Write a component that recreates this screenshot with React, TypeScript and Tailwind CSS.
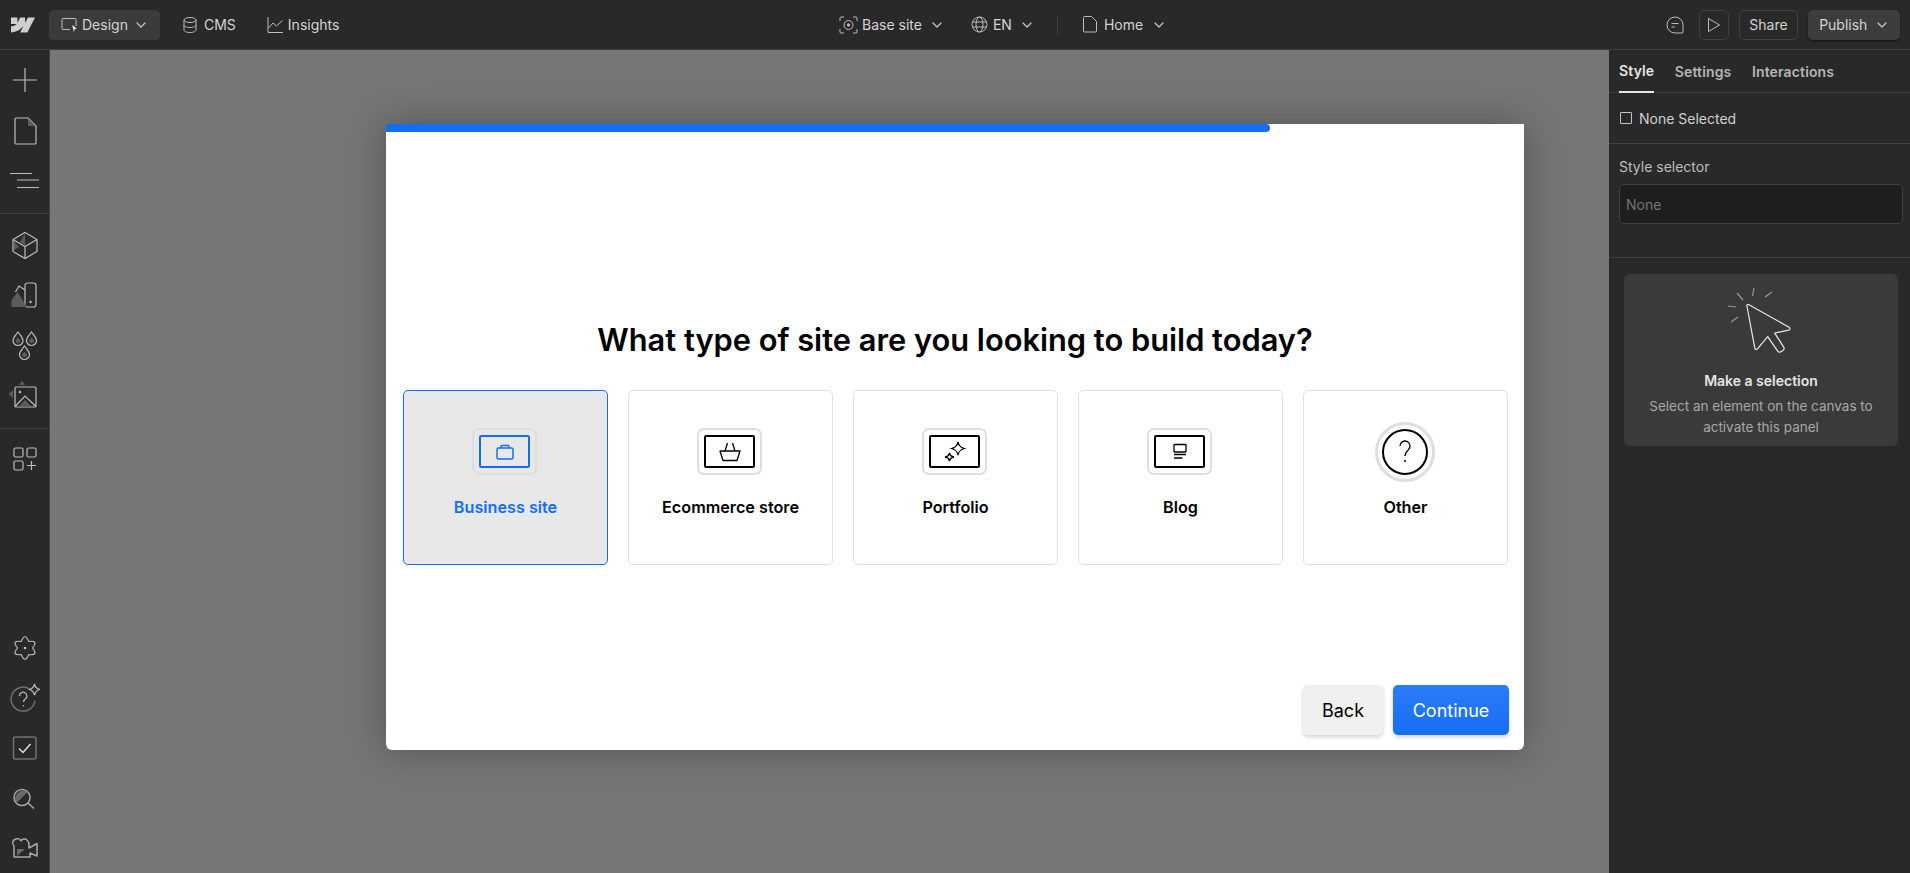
import type { ReactNode } from 'react';
import { ChevronDown } from 'lucide-react';
import { SiWebflow } from 'react-icons/si';

const shade = '#5c5c5c';
const line = '#bdbdbd';

function RailButton({ children }: { children: ReactNode }) {
  return (
    <div className="flex h-[50px] w-full shrink-0 items-center justify-center">
      <svg width="32" height="32" viewBox="0 0 32 32" fill="none" stroke={line} strokeWidth="1.2" className="overflow-visible">
        {children}
      </svg>
    </div>
  );
}

function TopItem({ icon, label, className }: { icon: ReactNode; label: string; className?: string }) {
  return (
    <div className={`flex items-center text-[14px] text-[#d4d4d4] ${className ?? ''}`}>
      {icon}
      <span>{label}</span>
    </div>
  );
}

function Chevron({ className }: { className?: string }) {
  return <ChevronDown size={16} strokeWidth={1.8} className={`-mr-[1.5px] text-[#c8c8c8] ${className ?? ''}`} />;
}

function SiteCard({
  label,
  active,
  round,
  children,
}: {
  label: string;
  active?: boolean;
  round?: boolean;
  children: ReactNode;
}) {
  return (
    <div
      className={`flex h-[175px] w-[205px] flex-col items-center rounded-[5px] border ${
        active ? 'border-[#146ef5] bg-[#e8e8e8] text-[#146ef5]' : 'border-[#e0e0e0] bg-white text-black'
      }`}
    >
      <div className="mt-[37px] flex h-[47px] items-center justify-center pr-[2px]">
        {round ? (
          <div className="flex h-[60px] w-[60px] shrink-0 items-center justify-center rounded-full border-[3px] border-[#dedede]">
            <div className="flex h-[46px] w-[46px] items-center justify-center rounded-full border-2 border-black">
              {children}
            </div>
          </div>
        ) : (
          <div className="flex h-[47px] w-[65px] items-center justify-center rounded-[7px] border-2 border-[#dedede]">
            <div className="flex h-[33px] w-[51px] items-center justify-center rounded-[2px] border-2 border-current">
              {children}
            </div>
          </div>
        )}
      </div>
      <div className="mt-[22px] text-[16.2px] leading-[20px] font-semibold">{label}</div>
    </div>
  );
}

export default function App() {
  return (
    <div className="relative flex h-screen w-full flex-col overflow-hidden bg-[#292929] font-[Inter,sans-serif]">
      {/* Top bar */}
      <header className="flex h-[50px] shrink-0 items-center border-b border-[#3f3f3f] bg-[#292929]">
        <div className="flex w-[839px] shrink-0 items-center">
          <SiWebflow size={24} className="ml-[11px] text-[#cfcfcf]" />
          <div className="ml-[14px] flex h-[30px] w-[111px] items-center rounded-[5px] bg-[#3b3b3b] pl-[12px] text-[14px] text-[#d4d4d4]">
            <svg width="16" height="16" viewBox="0 0 16 16" fill="none" stroke={line} className="mr-[5px]">
              <path d="M9 12.500H2a1 1 0 0 1-1-1V2.500a1 1 0 0 1 1-1h12a1 1 0 0 1 1 1V9" />
              <path d="M11 8l5 3.500-2.200.6L13 15z" fill="#e6e6e6" stroke="none" />
            </svg>
            <span>Design</span>
            <Chevron className="ml-[5.500px]" />
          </div>
          <TopItem
            className="ml-[23px]"
            label="CMS"
            icon={
              <svg width="14" height="18" viewBox="0 0 14 18" fill="none" stroke={line} className="mr-[7px]">
                <ellipse cx="7" cy="4" rx="6" ry="2.500" />
                <path d="M1 4v10c0 1.400 2.700 2.500 6 2.500s6-1.100 6-2.500V4M1 9c0 1.400 2.700 2.500 6 2.500S13 10.400 13 9" />
              </svg>
            }
          />
          <TopItem
            className="ml-[31px]"
            label="Insights"
            icon={
              <svg width="16" height="16" viewBox="0 0 16 16" fill="none" stroke={line} className="mr-[5px]">
                <path d="M1 0v15.500h15" />
                <path d="M1.500 11L6 6l3.500 3L15.500 3.500" />
              </svg>
            }
          />
        </div>
        <div className="flex items-center">
          <TopItem
            label="Base site"
            icon={
              <svg width="19" height="18" viewBox="0 0 19 18" fill="none" stroke={line} className="mr-[4px]">
                <path d="M1 5V2a1 1 0 0 1 1-1h3M14 1h3a1 1 0 0 1 1 1v3M18 13v3a1 1 0 0 1-1 1h-3M5 17H2a1 1 0 0 1-1-1v-3" />
                <circle cx="9.500" cy="9" r="4.500" />
                <circle cx="9.500" cy="9" r="1.200" fill={line} />
              </svg>
            }
          />
          <Chevron className="ml-[7.500px]" />
          <TopItem
            className="ml-[27px]"
            label="EN"
            icon={
              <svg width="17" height="17" viewBox="0 0 17 17" fill="none" stroke={line} className="mr-[5px]">
                <circle cx="8.500" cy="8.500" r="7.500" />
                <ellipse cx="8.500" cy="8.500" rx="3.500" ry="7.500" />
                <path d="M1.500 6h14M1.500 11h14" />
              </svg>
            }
          />
          <Chevron className="ml-[7.500px]" />
          <div className="ml-[23px] h-[20px] w-px bg-[#3f3f3f]" />
          <TopItem
            className="ml-[25px]"
            label="Home"
            icon={
              <svg width="14" height="17" viewBox="0 0 14 17" fill="none" stroke={line} className="mr-[7px]">
                <path d="M1.500.500H8.500L13.500 5.500V15a1 1 0 0 1-1 1h-11a1 1 0 0 1-1-1V1.500a1 1 0 0 1 1-1z" />
              </svg>
            }
          />
          <Chevron className="ml-[7.500px]" />
        </div>
        <div className="ml-auto flex items-center pr-[10px]">
          <svg width="18" height="18" viewBox="0 0 18 18" fill="none" stroke={line}>
            <path d="M9 1a8 8 0 0 1 8 8v7a1 1 0 0 1-1 1H9A8 8 0 0 1 9 1z" />
            <path d="M5.500 7.500h7M5.500 11h3.500" />
          </svg>
          <div className="ml-[15px] flex h-[30px] w-[30px] items-center justify-center rounded-[5px] border border-[#404040]">
            <svg width="14" height="16" viewBox="0 0 14 16" fill="none" stroke={line}>
              <path d="M1.500 1.500v13L12.500 8z" strokeLinejoin="round" />
            </svg>
          </div>
          <div className="ml-[10px] flex h-[30px] w-[59px] items-center justify-center rounded-[5px] border border-[#404040] text-[14px] text-[#d4d4d4]">
            Share
          </div>
          <div className="ml-[10px] flex h-[30px] w-[92px] items-center justify-center gap-[7px] rounded-[5px] bg-[#3d3d3d] text-[14px] text-[#d4d4d4] shadow-[0_1px_2px_rgba(0,0,0,0.5)]">
            <span>Publish</span>
            <Chevron />
          </div>
        </div>
      </header>

      <div className="flex min-h-0 flex-1">
        {/* Left rail */}
        <nav className="flex w-[50px] shrink-0 flex-col border-r border-[#3f3f3f] bg-[#292929]">
          <div className="border-b border-[#3f3f3f] pt-[5px] pb-[8px]">
            <RailButton>
              <path d="M16 4v24M4 16h24" />
            </RailButton>
            <RailButton>
              <path d="M7 4h12l8 8v17a1 1 0 0 1-1 1H7a1 1 0 0 1-1-1V5a1 1 0 0 1 1-1z" />
              <path d="M19 4.500l7.500 7.500H19z" fill={shade} stroke="none" />
            </RailButton>
            <RailButton>
              <path d="M1 9.500h22M8 16h22M8 23.500h22" />
            </RailButton>
          </div>
          <div className="border-b border-[#3f3f3f] pt-[6px] pb-[8px]">
            <RailButton>
              <path d="M16 3.500l12 7v12l-12 7-12-7v-12z" />
              <path d="M4 10.500l12 7 12-7M16 17.500v12" />
              <path d="M16 4.500l-5 8.500 5 3zM5 12v9l5-3z" fill={shade} stroke="none" />
            </RailButton>
            <RailButton>
              <rect x="16" y="4" width="11" height="24" rx="2.500" />
              <circle cx="21.500" cy="23" r="1.200" fill={line} stroke="none" />
              <path d="M16 11l-6-4-3.500 6" />
              <path d="M2.500 28v-7l6-8 9.500 15z" fill={shade} stroke="none" />
            </RailButton>
            <RailButton>
              <path d="M9 3c2.500 3.500 5 5.500 5 8.500a5 5 0 0 1-10 0C4 8.500 6.500 6.500 9 3zM22.500 3c2.500 3.500 5 5.500 5 8.500a5 5 0 0 1-10 0c0-3 2.500-5 5-8.500zM15.500 17c2.500 3.500 5 5.500 5 8.500a5 5 0 0 1-10 0c0-3 2.500-5 5-8.500z" />
              <path d="M9 8.500c1 1.300 2.500 2 2.500 3.200a2.500 2.500 0 0 1-5 0c0-1.200 1.500-1.900 2.500-3.200zM22.500 8.500c1 1.300 2.500 2 2.500 3.200a2.500 2.500 0 0 1-5 0c0-1.200 1.500-1.900 2.500-3.200zM15.500 22.500c1 1.300 2.500 2 2.500 3.200a2.500 2.500 0 0 1-5 0c0-1.200 1.500-1.900 2.500-3.200z" fill={shade} stroke="none" />
            </RailButton>
            <RailButton>
              <rect x="6" y="8" width="21" height="20" rx="1" />
              <circle cx="11" cy="13" r="1.300" fill={line} stroke="none" />
              <path d="M6 27.500L16 17l11 10.500" />
              <path d="M10 27.500l6-6.500 6.500 6.500z" fill={shade} stroke="none" />
              <path d="M16 6l-3-4.500L10 6zM4 11l-4.500 4L4 19z" fill={shade} stroke="none" />
            </RailButton>
          </div>
          <div className="pt-[5px]">
            <RailButton>
              <rect x="5" y="5" width="9" height="9" rx="1.500" />
              <rect x="18" y="5" width="9" height="9" rx="1.500" />
              <rect x="5" y="18" width="9" height="9" rx="1.500" />
              <path d="M22.500 18v9M18 22.500h9" />
            </RailButton>
          </div>
          <div className="mt-auto">
            <RailButton>
              <path d="M12.250 9.500Q16 0 19.750 9.500Q29.860 8 23.500 16Q29.860 24 19.750 22.500Q16 32 12.250 22.500Q2.140 24 8.500 16Q2.140 8 12.250 9.500z" strokeLinejoin="round" />
              <circle cx="16" cy="16" r="1.300" fill={line} stroke="none" />
            </RailButton>
            <RailButton>
              <path d="M20.500 7a12 12 0 1 0 5.500 11.500" stroke="#6e6e6e" strokeWidth="1.500" />
              <path d="M10.500 14a3.700 3.700 0 1 1 5.800 3c-1.100.8-1.800 1.500-1.800 3M14.500 23v1.500" />
              <path d="M25.500 2c.7 3 1.900 4.800 5.500 5.500-3.600.7-4.800 2.500-5.500 5.500-.7-3-1.900-4.800-5.500-5.500 3.600-.7 4.800-2.500 5.500-5.500z" />
            </RailButton>
            <RailButton>
              <rect x="4.500" y="5" width="22.500" height="22" rx="2" stroke="#707070" strokeWidth="1.500" />
              <path d="M10 16.500l4 4 7.500-8.500" stroke="#e0e0e0" strokeWidth="1.500" />
            </RailButton>
            <RailButton>
              <circle cx="13" cy="15.500" r="8" strokeWidth="1.500" stroke="#a8a8a8" />
              <path d="M19 21l6 5.500" strokeWidth="1.500" stroke="#a8a8a8" />
              <path d="M7.500 21A8 8 0 0 1 18.500 10z" fill="#6a6a6a" stroke="none" />
            </RailButton>
            <RailButton>
              <path d="M5 25V14C3 12 3 8 7 7c2-1 4 0 5 2 1-2 4-3 6-1 2 1.500 2 3 2 5v3l8-4.500V24l-7-3v4z" stroke="#a8a8a8" strokeWidth="1.500" strokeLinejoin="round" />
              <path d="M8 17h8l-8 7z" fill="#6a6a6a" stroke="none" />
            </RailButton>
          </div>
        </nav>

        {/* Canvas */}
        <main className="flex-1 bg-[#767676]" />

        {/* Right panel */}
        <aside className="w-[301px] shrink-0 bg-[#292929]">
          <div className="flex h-[43px] gap-[20.500px] border-b border-[#3f3f3f] px-[10px] text-[14px] font-semibold tracking-[0.01em] text-[#b5b5b5]">
            <div className="flex h-[43px] items-center border-b-2 border-[#e6e6e6] text-[#e6e6e6]">Style</div>
            <div className="flex h-[42px] items-center">Settings</div>
            <div className="flex h-[42px] items-center">Interactions</div>
          </div>
          <div className="flex h-[51px] items-center border-b border-[#3f3f3f] pl-[11px] text-[14px] text-[#d0d0d0]">
            <div className="mr-[7px] h-[12px] w-[12px] rounded-[1px] border border-[#c4c4c4]" />
            None Selected
          </div>
          <div className="h-[114px] border-b border-[#3f3f3f] px-[10px] pt-[13px]">
            <div className="text-[14px] leading-[20px] text-[#bdbdbd]">Style selector</div>
            <div className="mt-[7px] flex h-[40px] w-[284px] items-center rounded-[5px] border border-[#404040] bg-[#1e1e1e] pl-[6px] text-[14px] text-[#757575]">
              None
            </div>
          </div>
          <div className="mx-[15px] mt-[16px] flex h-[172px] w-[274px] flex-col items-center rounded-[6px] bg-[#3a3a3a] pt-[12px]">
            <svg width="66" height="72" viewBox="0 0 66 72" fill="none" stroke="#e8e8e8" strokeWidth="1.200" className="-ml-[4px] overflow-visible">
              <path d="M21 20.500c-.5-1.500.5-2.500 2-1.800l40 22.500c1.500 1 1.300 2.500-.3 2.900l-14 3 9 14c.8 1.300.4 2.500-.8 3.300l-2.400 1.500c-1 .6-2 .4-2.800-.8l-10-14.500-10 12c-1.300 1.500-2.800.8-3-1z" strokeLinejoin="round" />
              <path d="M11 7l6 7M28 2l-1.500 8M46 6l-7 5M2 20l8 1M5 36l7-5" stroke="#9a9a9a" />
            </svg>
            <div className="mt-[13px] text-[14px] leading-[20px] font-semibold text-[#e6e6e6]">Make a selection</div>
            <div className="mt-[5px] text-center text-[13.5px] leading-[21px] text-[#a8a8a8]">
              Select an element on the canvas to
              <br />
              activate this panel
            </div>
          </div>
        </aside>
      </div>

      {/* Site type dialog */}
      <div className="absolute inset-0 flex items-center justify-center pt-px">
        <div className="flex h-[626px] w-[1138px] flex-col rounded-b-[6px] bg-white pb-[15px] shadow-[0_0_40px_rgba(0,0,0,0.3)]">
          <div className="h-[8px] w-[884px] rounded-r-full bg-[#146ef5]" />
          <h1 className="mt-[188px] text-center text-[30.8px] leading-[40px] font-semibold text-black">
            What type of site are you looking to build today?
          </h1>
          <div className="mt-[30px] ml-[17px] flex gap-[20px]">
            <SiteCard label="Business site" active>
              <svg width="18" height="16" viewBox="0 0 18 16" fill="none" stroke="currentColor" strokeWidth="1.500">
                <rect x="1" y="4" width="16" height="11" rx="1.500" />
                <path d="M5 4V2.500a1 1 0 0 1 1-1h6a1 1 0 0 1 1 1V4" />
              </svg>
            </SiteCard>
            <SiteCard label="Ecommerce store">
              <svg width="22" height="20" viewBox="0 0 22 20" fill="none" stroke="currentColor" strokeWidth="1.300">
                <path d="M1 9h20L18 18.500H4zM6 9L8.500 1M16 9L13.500 1" strokeLinejoin="round" />
              </svg>
            </SiteCard>
            <SiteCard label="Portfolio">
              <svg width="22" height="22" viewBox="0 0 22 22" fill="none" stroke="currentColor" strokeWidth="1.300">
                <path d="M14 1c.8 3.800 2.200 5.200 6.500 6.500-4.300 1.300-5.700 2.700-6.500 6.500-.8-3.800-2.200-5.200-6.500-6.500C11.800 6.200 13.200 4.800 14 1z" />
                <path d="M5.500 12c.4 2 1.600 3.600 4.500 4-2.900.4-4.100 2-4.500 4-.4-2-1.600-3.600-4.500-4 2.900-.4 4.100-2 4.500-4z" />
              </svg>
            </SiteCard>
            <SiteCard label="Blog">
              <svg width="18" height="18" viewBox="0 0 18 18" fill="none" stroke="currentColor" strokeWidth="1.300">
                <rect x="3" y="1.500" width="12" height="7.500" rx=".5" />
                <path d="M3 11.500h12M3 15h8.500" />
              </svg>
            </SiteCard>
            <SiteCard label="Other" round>
              <svg width="14" height="26" viewBox="0 0 14 26" fill="none" stroke="currentColor" strokeWidth="1.300">
                <path d="M2 7a5 5 0 1 1 8.500 3.600c-2 2-3.500 3.500-3.500 6.400" />
                <circle cx="7" cy="22" r="1" fill="currentColor" stroke="none" />
              </svg>
            </SiteCard>
          </div>
          <div className="mt-auto flex justify-end gap-[10px] pr-[15px]">
            <div className="flex h-[50px] w-[80px] items-center justify-center rounded-[5px] bg-[#f0f0f0] text-[18px] text-black shadow-[0_2px_4px_rgba(0,0,0,0.18)]">
              Back
            </div>
            <div className="flex h-[50px] w-[116px] items-center justify-center rounded-[5px] bg-linear-to-b from-[#2a7bf6] to-[#146ef5] text-[18px] text-white shadow-[0_2px_4px_rgba(0,0,0,0.18)]">
              Continue
            </div>
          </div>
        </div>
      </div>
    </div>
  );
}
